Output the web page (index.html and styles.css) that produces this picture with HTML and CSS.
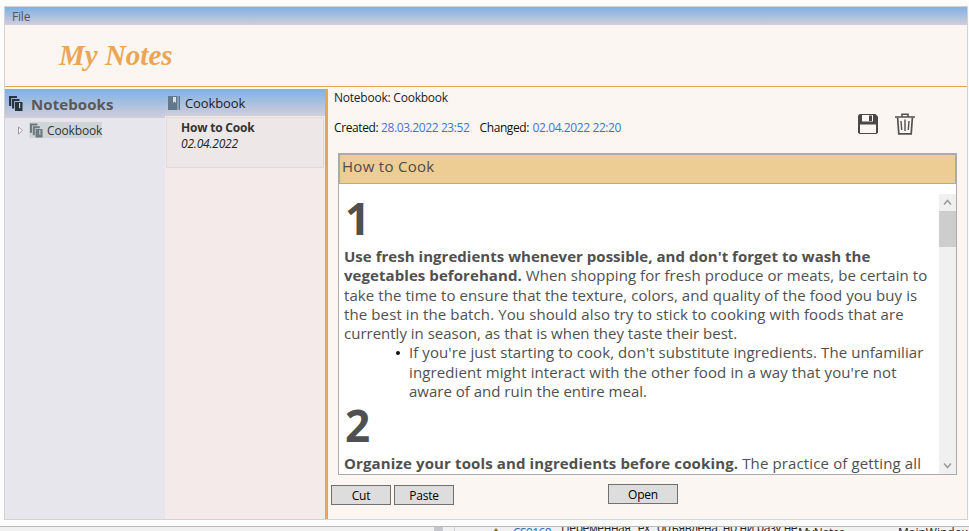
FILE: index.html
```html
<!DOCTYPE html>
<html lang="en">
<head>
<meta charset="utf-8">
<title>My Notes</title>
<link rel="stylesheet" href="styles.css">
</head>
<body>
<svg class="defs" width="0" height="0">
  <symbol id="books" viewBox="0 0 14 15">
    <path d="M0 0H8V2H2.200V10H0ZM3 3H10.500V5H5.200V12.500H3ZM6 6H13.500V15H6Z" fill="currentColor"/>
    <path class="mark" d="M10 7h1.200v5.500l-.6-.6-.6.600z"/>
  </symbol>
</svg>
<div class="window">
  <nav class="menu"><span>File</span></nav>
  <header class="brand"><h1>My Notes</h1></header>
  <main class="columns">
    <aside class="notebooks">
      <div class="notebooks-head"><svg class="books"><use href="#books"/></svg><span>Notebooks</span></div>
      <div class="tree-row">
        <svg class="arrow" viewBox="0 0 5 9"><path d="M.5 .9v7.200L4.400 4.500z" fill="#fff" stroke="#999"/></svg>
        <div class="tree-item"><svg class="books"><use href="#books"/></svg><span>Cookbook</span></div>
      </div>
    </aside>
    <section class="notes">
      <div class="notes-head">
        <svg class="book" viewBox="0 0 12 14"><path d="M0 0h9.500v14H0zM10.500 0H12v14h-1.500z" fill="#62798c"/><path d="M5 1h3v6L6.500 5.500 5 7z" fill="#d8e2ec"/></svg>
        <span>Cookbook</span>
      </div>
      <div class="note-card"><strong>How to Cook</strong><em>02.04.2022</em></div>
    </section>
    <section class="detail">
      <div class="path">Notebook: Cookbook</div>
      <div class="meta">
        <span class="label created">Created:</span><span class="date">28.03.2022 23:52</span>
        <span class="label changed">Changed:</span><span class="date">02.04.2022 22:20</span>
        <div class="actions">
          <svg class="save" viewBox="0 0 20 20"><path d="M1.500 0H17.500L20 2.500V18.500L18.500 20H1.500L0 18.500V1.500Z" fill="#4a4848"/><path d="M4 1h11v6.500H4zM2 10.500h16V19H2z" fill="#fbf6f2"/><path d="M11 1.500h3V7h-3z" fill="#4a4848"/></svg>
          <svg class="trash" viewBox="0 0 20 22" fill="none" stroke="#55514f"><path d="M0 4h20M7 3.500V1.200h6v2.300" stroke-width="1.600"/><path d="M2.600 4.500l1.200 16.300h12.400L17.400 4.500" stroke-width="1.700"/><path d="M6 8l.7 9M10 6.500V18M14 8l-.7 9" stroke-width="1.400"/></svg>
        </div>
      </div>
      <div class="editor">
        <div class="editor-title">How to Cook</div>
        <div class="editor-body">
          <article class="text">
            <h2>1</h2>
            <p><span class="l1"><b>Use fresh ingredients whenever possible, and don't forget to wash the</b></span>
            <span class="l2"><b>vegetables beforehand.</b> When shopping for fresh produce or meats, be certain to</span>
            <span class="l3">take the time to ensure that the texture, colors, and quality of the food you buy is</span>
            <span class="l4">the best in the batch. You should also try to stick to cooking with foods that are</span>
            <span class="l5">currently in season, as that is when they taste their best.</span></p>
            <ul><li><span class="l6">If you're just starting to cook, don't substitute ingredients. The unfamiliar</span>
            <span class="l7">ingredient might interact with the other food in a way that you're not</span>
            <span class="l8">aware of and ruin the entire meal.</span></li></ul>
            <h2 class="second">2</h2>
            <p><span class="l9"><b>Organize your tools and ingredients before cooking.</b> The practice of getting all</span></p>
          </article>
          <div class="scrollbar">
            <svg viewBox="0 0 17 17"><path d="M5 10.500l3.500-4 3.500 4" /></svg>
            <div class="thumb"></div>
            <svg class="down" viewBox="0 0 17 17"><path d="M5 6.500l3.500 4 3.500-4" /></svg>
          </div>
        </div>
      </div>
      <div class="buttons"><button>Cut</button><button>Paste</button><button class="open">Open</button></div>
    </section>
  </main>
</div>
<footer class="behind">
  <div class="gutter"></div>
  <svg class="warn" viewBox="0 0 6 4"><path d="M3 0l3 4H0z" fill="#8a6d10"/></svg>
  <span class="code">CS0168</span>
  <span class="msg">Переменная "ex" объявлена, но ни разу не</span>
  <span class="proj">MyNotes</span>
  <span class="file">MainWindow</span>
</footer>
</body>
</html>
```

FILE: styles.css
```css
* { box-sizing: border-box; }
body { margin: 0; width: 969px; height: 531px; overflow: hidden; background: #fcfcfc; font: 12px/16px "Open Sans", sans-serif; color: #222; }
h1, h2, p, ul { margin: 0; padding: 0; }
svg { display: block; flex: none; }
.defs { position: absolute; }
.window { width: 964px; height: 514px; margin: 6px 0 0 4px; border: 1px solid #d3d3d3; background: #fbf6f2; display: flex; flex-direction: column; }
.menu { height: 18px; flex: none; padding-left: 7px; line-height: 19px; color: #555; letter-spacing: -.2px; background: linear-gradient(#7eb1e4, #d2cedb); }
.brand { height: 62px; flex: none; padding: 12px 0 0 54px; border-bottom: 1px solid #e8a654; }
.brand h1 { font: italic bold 29px/36px "Liberation Serif", serif; color: #eaa655; white-space: nowrap; }
.columns { flex: 1; display: flex; min-height: 0; padding-top: 2px; }
.notebooks { width: 160px; background: #e8e6ed; }
.notebooks-head { height: 29px; padding-left: 4px; display: flex; gap: 8px; font-weight: bold; font-size: 15px; line-height: 31px; letter-spacing: .1px; color: #595959; background: linear-gradient(#7eb1e4, #d2cedb); }
.books { width: 14px; height: 15px; color: #28343d; }
.mark { fill: #c4cfdc; }
.notebooks-head .books { margin-top: 7px; }
.tree-row { display: flex; margin-top: 4px; padding-left: 13px; }
.arrow { width: 5px; height: 9px; margin: 4px 6px 0 0; }
.tree-item { width: 73px; height: 16px; display: flex; gap: 4px; background: #d0d5d8; line-height: 17px; letter-spacing: -.15px; color: #333; }
.tree-item .books { color: #6b7880; margin-left: 1px; width: 13px; margin-top: 1px; }
.notes { width: 160px; background: #f4eaea; }
.notes-head { height: 27px; display: flex; padding-left: 3px; gap: 5px; font-size: 13px; line-height: 29px; letter-spacing: -.1px; background: linear-gradient(#7eb1e4, #d2cedb); }
.book { width: 12px; height: 14px; margin-top: 7px; }
.note-card { width: 158px; height: 51px; margin: 1px 0 0 1px; padding: 2px 0 0 14px; border: 1px solid #dedada; background: #ede7e7; display: flex; flex-direction: column; letter-spacing: -.2px; }
.note-card strong { color: #333; }
.detail { flex: 1; border-left: 3px solid #e8a654; min-width: 0; }
.path { padding-left: 6px; margin-top: 1px; letter-spacing: -.23px; }
.meta { display: flex; padding-left: 6px; height: 47px; line-height: 44px; letter-spacing: -.4px; white-space: nowrap; }
.label { color: #111; }
.date { color: #3b73dc; }
.created { width: 47px; }
.changed { width: 53px; margin-left: 10px; }
.actions { display: flex; gap: 17px; margin: 8px 52px 0 auto; }
.save { width: 20px; height: 20px; }
.trash { width: 20px; height: 22px; margin-top: -1px; }
.editor { width: 619px; height: 322px; margin-left: 10px; border: 1px solid #ababad; background: #fff; display: flex; flex-direction: column; }
.editor-title { height: 30px; flex: none; border: 1px solid #ababad; background: #eecd94; font-size: 15px; line-height: 23px; letter-spacing: .3px; padding-left: 2px; color: #4c4c4c; }
.editor-body { flex: 1; display: flex; min-height: 0; }
.text { flex: 1; padding-left: 5px; overflow: hidden; font-size: 15px; line-height: 19.300px; color: #505050; }
.text h2 { font-size: 44px; line-height: 58px; height: 63px; padding: 5px 0 0 1px; }
.text span { display: block; white-space: nowrap; }
.l1 { letter-spacing: .03px; }
.l2, .l3 { letter-spacing: .07px; }
.l4, .l7 { letter-spacing: .11px; }
.l6 { letter-spacing: .08px; }
.l9 { letter-spacing: .13px; }
.text ul { padding-left: 65px; list-style: none; }
.text li { position: relative; }
.text li::before { content: ""; position: absolute; left: -13px; top: 8px; width: 4px; height: 4px; border-radius: 50%; background: #111; }
.text h2.second { height: 53px; padding-top: 0; line-height: 48px; }
.scrollbar { width: 17px; margin-top: 10px; background: #f0f0f0; display: flex; flex-direction: column; }
.scrollbar svg { width: 17px; height: 17px; fill: none; stroke: #9a9a9a; stroke-width: 1.500; }
.scrollbar .down { margin-top: auto; }
.thumb { height: 36px; background: #cdcdcd; }
.buttons { display: flex; gap: 3px; margin: 9px 0 0 3px; }
button { width: 60px; height: 20px; margin: 1px 0 0; padding: 0; border: 1px solid #707070; background: #ddd; font: 12px/19px "Open Sans", sans-serif; letter-spacing: -.2px; color: #000; }
button.open { width: 70px; height: 20px; margin: 0 0 1px 151px; }
.behind { height: 5px; margin-top: 6px; border-top: 1px solid #bababa; background: #f1f1f1; display: flex; overflow: hidden; color: #222; line-height: 4px; white-space: nowrap; }
.gutter { width: 21px; flex: none; height: 5px; margin-left: 434px; border-left: 9px solid #c6c6cd; border-right: 1px solid #d0d0dd; }
.warn { width: 6px; height: 4px; margin: 1px 0 0 38px; }
.code { width: 48px; flex: none; margin-left: 14px; color: #1570c4; margin-top: 4px; letter-spacing: -.6px; }
.msg { width: 237px; flex: none; letter-spacing: -.4px; margin-top: -1px; }
.proj { width: 100px; flex: none; margin-top: 4px; letter-spacing: -.5px; }
.file { margin-top: 4px; }
```
